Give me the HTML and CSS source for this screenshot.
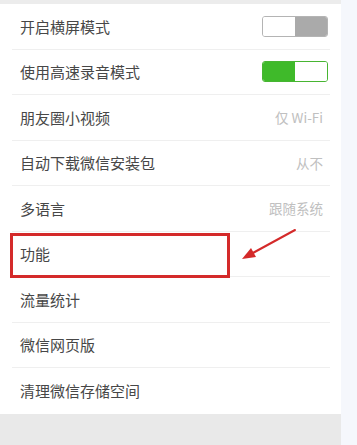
FILE: index.html
```html
<!DOCTYPE html>
<html lang="zh-CN">
<head>
  <meta charset="UTF-8" />
  <meta name="viewport" content="width=device-width, initial-scale=1.0"/>
  <title>通用设置</title>
  <link rel="stylesheet" href="styles.css">
</head>
<body>

  <div class="page">
    <div class="panel">
      <div class="top-gap"></div>

      <!-- Settings list -->
      <div class="settings">
        <div class="row">
          <span class="label">开启横屏模式</span>
          <span class="switch off"><i></i><i></i></span>
        </div>
        <div class="row">
          <span class="label">使用高速录音模式</span>
          <span class="switch on"><i></i><i></i></span>
        </div>
        <div class="row">
          <span class="label">朋友圈小视频</span>
          <span class="value">仅 Wi-Fi</span>
        </div>
        <div class="row">
          <span class="label">自动下载微信安装包</span>
          <span class="value">从不</span>
        </div>
        <div class="row">
          <span class="label">多语言</span>
          <span class="value">跟随系统</span>
        </div>
        <div class="row">
          <span class="label">功能</span>
        </div>
        <div class="row">
          <span class="label">流量统计</span>
        </div>
        <div class="row">
          <span class="label">微信网页版</span>
        </div>
        <div class="row last">
          <span class="label">清理微信存储空间</span>
        </div>
      </div>

      <div class="bottom-gap"></div>

      <!-- Annotation -->
      <div class="mark-box"></div>
      <svg class="mark-arrow" width="60" height="34" viewBox="0 0 60 34">
        <line x1="56" y1="2" x2="12" y2="26" stroke="#d42a2a" stroke-width="2" stroke-linecap="round"/>
        <polygon points="3,31 12,20 17,29" fill="#d42a2a"/>
      </svg>
    </div>
    <div class="side"></div>
  </div>

</body>
</html>
```

FILE: styles.css
```css
html, body {
  margin: 0;
  padding: 0;
  height: 100%;
}

body {
  font-family: "Noto Sans CJK SC", "Noto Sans", sans-serif;
  background: #f5f7fc;
}

.page {
  display: flex;
  height: 445px;
}

.panel {
  position: relative;
  width: 341px;
  display: flex;
  flex-direction: column;
  background: #fff;
}

.side {
  flex: 1;
  background: #f5f7fc;
}

.top-gap {
  height: 4px;
  background: #ececec;
}

.bottom-gap {
  flex: 1;
  background: #e9e9e9;
}

.row {
  box-sizing: border-box;
  height: 45.5px;
  margin: 0 11px 0 12px;
  padding: 0 7px 0 8px;
  display: flex;
  align-items: center;
  justify-content: space-between;
  border-bottom: 1px solid #efefef;
}

.row.last {
  border-bottom: none;
}

.label {
  font-size: 15px;
  color: #474747;
}

.value {
  font-size: 13.5px;
  color: #c0c0c0;
}

.switch {
  box-sizing: border-box;
  width: 66px;
  height: 21px;
  margin-right: -5px;
  border-radius: 3px;
  display: flex;
  overflow: hidden;
}

.switch i {
  flex: 1;
}

.switch.off {
  border: 1px solid #b4b4b4;
}

.switch.off i:first-child {
  background: #fff;
}

.switch.off i:last-child {
  background: #aaaaaa;
}

.switch.on {
  border: 1px solid #47b532;
}

.switch.on i:first-child {
  background: #3fba2a;
}

.switch.on i:last-child {
  background: #fff;
}

.mark-box {
  position: absolute;
  left: 10px;
  top: 233px;
  width: 220px;
  height: 45px;
  box-sizing: border-box;
  border: 3px solid #d42a2a;
}

.mark-arrow {
  position: absolute;
  left: 239px;
  top: 228px;
}
```
